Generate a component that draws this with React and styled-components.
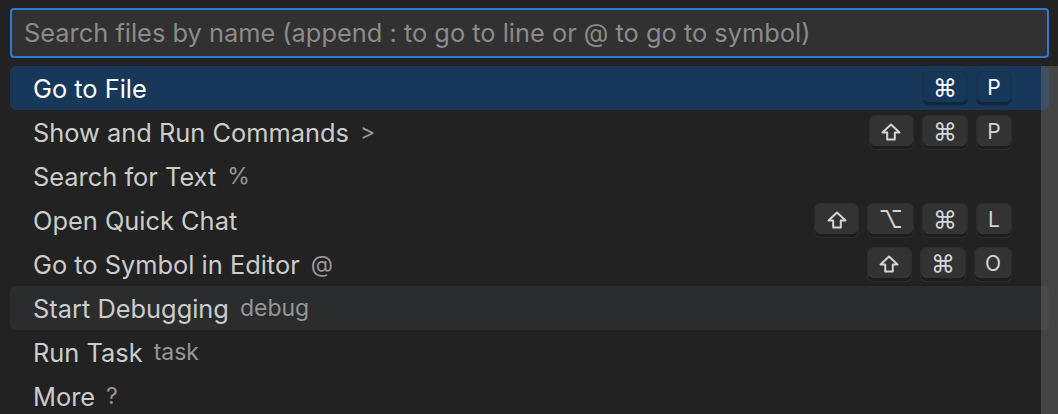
import React from "react";
import styled, { createGlobalStyle, css } from "styled-components";

const GlobalStyle = createGlobalStyle`
  html, body {
    margin: 0;
    padding: 0;
    background: #222222;
  }
  body {
    font-family: Inter, "Noto Sans", "DejaVu Sans", sans-serif;
    color: #cccccc;
  }
`;

const items = [
  { label: "Go to File", keys: ["⌘", "P"], selected: true },
  { label: "Show and Run Commands", desc: ">", keys: ["⇧", "⌘", "P"] },
  { label: "Search for Text", desc: "%" },
  { label: "Open Quick Chat", keys: ["⇧", "⌥", "⌘", "L"] },
  { label: "Go to Symbol in Editor", desc: "@", keys: ["⇧", "⌘", "O"] },
  { label: "Start Debugging", desc: "debug", hovered: true },
  { label: "Run Task", desc: "task" },
  { label: "More", desc: "?" },
];

const Widget = styled.div`
  position: relative;
  width: 1058px;
  height: 414px;
  overflow: hidden;
  padding: 8px 9px 0 10px;
  box-sizing: border-box;
  display: flex;
  flex-direction: column;
  gap: 8px;
`;

const SearchBox = styled.div`
  flex-shrink: 0;
  height: 50px;
  width: 1039px;
  box-sizing: border-box;
  background: #313131;
  border: 2px solid #2f78d3;
  border-radius: 4px;
  display: flex;
  align-items: center;
  padding: 0 12px 1px;
  font-size: 25.4px;
  color: #8b8b8b;
  white-space: nowrap;
`;

const List = styled.div`
  flex-shrink: 0;
  display: flex;
  flex-direction: column;
`;

const Row = styled.div`
  flex-shrink: 0;
  height: 44px;
  width: 1039px;
  box-sizing: border-box;
  display: flex;
  align-items: center;
  padding: 0 37px 0 23px;
  border-radius: 6px;
  font-size: 25.4px;
  color: #cccccc;
  ${({ $selected }) =>
    $selected &&
    css`
      background: #173859;
      color: #ffffff;
    `}
  ${({ $hovered }) =>
    $hovered &&
    css`
      background: #2a2c2e;
    `}
`;

const Label = styled.span`
  white-space: nowrap;
`;

const Desc = styled.span`
  margin-left: 11px;
  font-size: 23px;
  color: #969696;
  white-space: nowrap;
`;

const Keys = styled.div`
  margin-left: auto;
  display: flex;
  gap: 8px;
`;

const Key = styled.span`
  height: 35px;
  min-width: ${({ $symbol }) => ($symbol ? "45px" : "36px")};
  box-sizing: border-box;
  display: inline-flex;
  align-items: center;
  justify-content: center;
  padding: 0 10px 1px;
  border-radius: 6px;
  font-size: ${({ $symbol }) => ($symbol ? "24px" : "21px")};
  font-family: Inter, "DejaVu Sans", sans-serif;
  color: #d4d4d4;
  background: #333333;
  border: 1px solid #2c2c2c;
  box-shadow: inset 0 -3px 0 #1d1d1d;
  ${({ $selected }) =>
    $selected &&
    css`
      background: #163759;
      color: #ffffff;
      border-color: #1c3047;
      box-shadow: inset 0 -3px 0 #10263c;
    `}
`;

const ShiftIcon = () => (
  <svg width="20" height="18" viewBox="0 0 20 18" fill="none">
    <path
      d="M10 1.5 L18.5 9.5 H13.8 V16.5 H6.2 V9.5 H1.5 Z"
      stroke="currentColor"
      strokeWidth="2"
      strokeLinejoin="round"
    />
  </svg>
);

const Scrollbar = styled.div`
  position: absolute;
  left: 1041px;
  top: 66px;
  width: 17px;
  bottom: 0;
  background: rgba(121, 121, 121, 0.4);
`;

const isSymbol = (k) => /[⌘⇧⌥]/.test(k);

export default function App() {
  return (
    <>
      <GlobalStyle />
      <Widget>
        <SearchBox>
          Search files by name (append : to go to line or @ to go to symbol)
        </SearchBox>
        <List>
          {items.map((item) => (
            <Row
              key={item.label}
              $selected={item.selected}
              $hovered={item.hovered}
            >
              <Label>{item.label}</Label>
              {item.desc && <Desc>{item.desc}</Desc>}
              {item.keys && (
                <Keys>
                  {item.keys.map((k, i) => (
                    <Key key={i} $symbol={isSymbol(k)} $selected={item.selected}>
                      {k === "⇧" ? <ShiftIcon /> : k}
                    </Key>
                  ))}
                </Keys>
              )}
            </Row>
          ))}
        </List>
        <Scrollbar />
      </Widget>
    </>
  );
}
